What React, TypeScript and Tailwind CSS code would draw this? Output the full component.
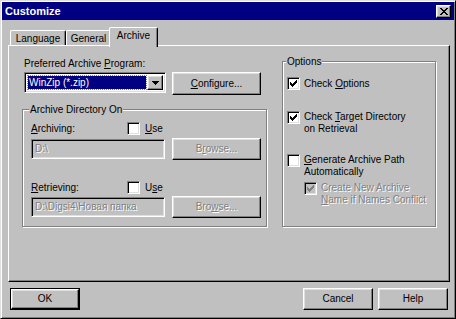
import React from "react";

const raised =
  "border border-t-white border-l-white border-r-black border-b-black shadow-[inset_-1px_-1px_0_#808080,inset_1px_1px_0_#dfdfdf]";
const sunken =
  "border border-t-[#808080] border-l-[#808080] border-r-white border-b-white shadow-[inset_1px_1px_0_#000,inset_-1px_-1px_0_#dfdfdf]";
const etched =
  "border border-[#808080] shadow-[inset_1px_1px_0_#fff,1px_1px_0_#fff]";
const disabledText = "text-[#808080] [text-shadow:1px_1px_0_#fff]";

const Check: React.FC<{ color?: string }> = ({ color = "#000" }) => (
  <svg width="7" height="7" viewBox="0 0 7 7" className="block">
    <path
      d="M0 2h1v1h1v1h1V3h1V2h1V1h1V0h1v3H6v1H5v1H4v1H3v1H2V6H1V5H0z"
      fill={color}
    />
  </svg>
);

// 13x13 Win98 checkbox
const CheckBox: React.FC<{ checked?: boolean; disabled?: boolean }> = ({
  checked,
  disabled,
}) => (
  <div
    className={`w-[13px] h-[13px] shrink-0 flex items-center justify-center ${sunken} ${
      disabled ? "bg-[#c0c0c0]" : "bg-white"
    }`}
  >
    {checked && <Check color={disabled ? "#808080" : "#000"} />}
  </div>
);

const Button: React.FC<{
  children: React.ReactNode;
  className?: string;
  disabled?: boolean;
  isDefault?: boolean;
}> = ({ children, className = "", disabled, isDefault }) => {
  const inner = (
    <div
      className={`flex items-center justify-center w-full h-full bg-[#c0c0c0] ${raised} ${
        disabled ? disabledText : "text-black"
      }`}
    >
      {children}
    </div>
  );
  if (isDefault) {
    return <div className={`border border-black ${className}`}>{inner}</div>;
  }
  return <div className={className}>{inner}</div>;
};

const Field: React.FC<{ value: string }> = ({ value }) => (
  <div
    className={`w-[134px] h-[20px] flex items-center pl-[3px] bg-[#c0c0c0] ${sunken} ${disabledText}`}
  >
    {value}
  </div>
);

const Tab: React.FC<{ label: string; active?: boolean; className?: string }> = ({
  label,
  active,
  className = "",
}) => (
  <div
    className={`flex items-center justify-center bg-[#c0c0c0] rounded-t-[2px] border-t border-l border-r border-t-white border-l-white border-r-black shadow-[inset_-1px_0_0_#808080] ${
      active ? "relative z-10 h-[20px] -mb-[2px] pb-[3px]" : "h-[15px] pt-[1px]"
    } ${className}`}
  >
    {label}
  </div>
);

export default function App() {
  return (
    <div className="w-[456px] h-[319px] bg-[#c0c0c0] border border-t-[#dfdfdf] border-l-[#dfdfdf] border-r-black border-b-black shadow-[inset_1px_1px_0_#fff,inset_-1px_-1px_0_#808080] font-['Liberation_Sans',Arial,sans-serif] text-[10px] leading-[12px] text-black overflow-hidden select-none">
      {/* title bar */}
      <div className="mx-[1px] mt-[1px] h-[18px] bg-[#000080] flex items-center justify-between pl-[3px] pr-[3px]">
        <span className="text-white font-bold text-[11px]">Customize</span>
        <div className={`w-[15px] h-[13px] bg-[#c0c0c0] flex items-center justify-center ${raised}`}>
          <svg width="8" height="7" viewBox="0 0 8 7">
            <path
              d="M0 0h2v1h1v1h2V1h1V0h2v1H7v1H6v1H5v1h1v1h1v1h1v1H6V6H5V5H3v1H2v1H0V6h1V5h1V4h1V3H2V2H1V1H0z"
              fill="#000"
            />
          </svg>
        </div>
      </div>

      {/* tabs */}
      <div className="mt-[7px] h-[18px] pl-[9px] flex items-end">
        <Tab label="Language" className="w-[56px]" />
        <Tab label="General" className="w-[45px]" />
        <Tab label="Archive" active className="w-[49px] -ml-[2px]" />
      </div>

      {/* tab panel */}
      <div className="ml-[7px] w-[442px] h-[237px] border border-t-white border-l-white border-r-black border-b-black shadow-[inset_-1px_-1px_0_#808080] flex items-start">
        {/* left column */}
        <div className="pl-[13px] flex flex-col">
          <div className="pl-[2px] mt-[11px] leading-[13px]">
            Preferred Archive <u>P</u>rogram:
          </div>
          <div className="mt-[2px] pl-[2px] flex items-start">
            <div className={`w-[142px] h-[21px] bg-white flex items-stretch p-[2px] ${sunken}`}>
              <div className="flex-1 m-[1px] bg-[#000080] text-white flex items-center pl-[1px] outline outline-1 outline-dotted outline-[#808080]">
                WinZip (*.zip)
              </div>
              <div className={`w-[16px] bg-[#c0c0c0] flex items-center justify-center ${raised}`}>
                <svg width="7" height="4" viewBox="0 0 7 4">
                  <path d="M0 0h7v1H6v1H5v1H4v1H3V3H2V2H1V1H0z" fill="#000" />
                </svg>
              </div>
            </div>
            <Button className="ml-[6px] w-[89px] h-[23px]">
              <span>
                <u>C</u>onfigure...
              </span>
            </Button>
          </div>

          {/* Archive Directory On */}
          <div className={`mt-[14px] w-[245px] h-[118px] ${etched}`}>
            <div className="-mt-[7px] ml-[6px] w-fit px-[1px] bg-[#c0c0c0] leading-[13px]">
              Archive Directory On
            </div>
            <div className="mt-[6px] pl-[8px] flex items-center h-[13px]">
              <span className="w-[96px]">
                <u>A</u>rchiving:
              </span>
              <CheckBox />
              <span className="ml-[5px]">
                <u>U</u>se
              </span>
            </div>
            <div className="mt-[3px] pl-[8px] h-[22px] flex items-center">
              <Field value={"D:\\"} />
              <Button disabled className="ml-[7px] w-[89px] h-[22px]">
                <span>
                  B<u>r</u>owse...
                </span>
              </Button>
            </div>
            <div className="mt-[21px] pl-[8px] flex items-center h-[13px]">
              <span className="w-[96px]">
                <u>R</u>etrieving:
              </span>
              <CheckBox />
              <span className="ml-[5px]">
                U<u>s</u>e
              </span>
            </div>
            <div className="mt-[2px] pl-[8px] h-[22px] flex items-center">
              <Field value={"D:\\Digsi4\\Новая папка"} />
              <Button disabled className="ml-[7px] w-[89px] h-[22px]">
                <span>
                  Bro<u>w</u>se...
                </span>
              </Button>
            </div>
          </div>
        </div>

        {/* Options */}
        <div className={`ml-[15px] mt-[15px] w-[154px] h-[166px] ${etched}`}>
          <div className="-mt-[7px] ml-[3px] w-fit px-[1px] bg-[#c0c0c0] leading-[13px]">
            Options
          </div>
          <div className="pl-[4px] flex flex-col">
            <div className="mt-[9px] flex items-start">
              <CheckBox checked />
              <span className="ml-[4px] leading-[12px] mt-[1px]">
                Check <u>O</u>ptions
              </span>
            </div>
            <div className="mt-[21px] flex items-start">
              <CheckBox checked />
              <span className="ml-[4px] leading-[12px]">
                Check <u>T</u>arget Directory
                <br />
                on Retrieval
              </span>
            </div>
            <div className="mt-[19px] flex items-start">
              <CheckBox />
              <span className="ml-[4px] leading-[12px]">
                <u>G</u>enerate Archive Path
                <br />
                Automatically
              </span>
            </div>
            <div className="mt-[4px] pl-[17px] flex items-start">
              <CheckBox checked disabled />
              <span className={`ml-[4px] leading-[12px] ${disabledText}`}>
                Create New Archive
                <br />
                <u>N</u>ame if Names Conflict
              </span>
            </div>
          </div>
        </div>
      </div>

      {/* bottom buttons */}
      <div className="mt-[6px] pl-[9px] pr-[7px] flex items-start">
        <Button isDefault className="w-[70px] h-[22px]">
          OK
        </Button>
        <div className="ml-auto flex gap-[5px]">
          <Button className="w-[70px] h-[22px]">Cancel</Button>
          <Button className="w-[70px] h-[22px]">Help</Button>
        </div>
      </div>
    </div>
  );
}
